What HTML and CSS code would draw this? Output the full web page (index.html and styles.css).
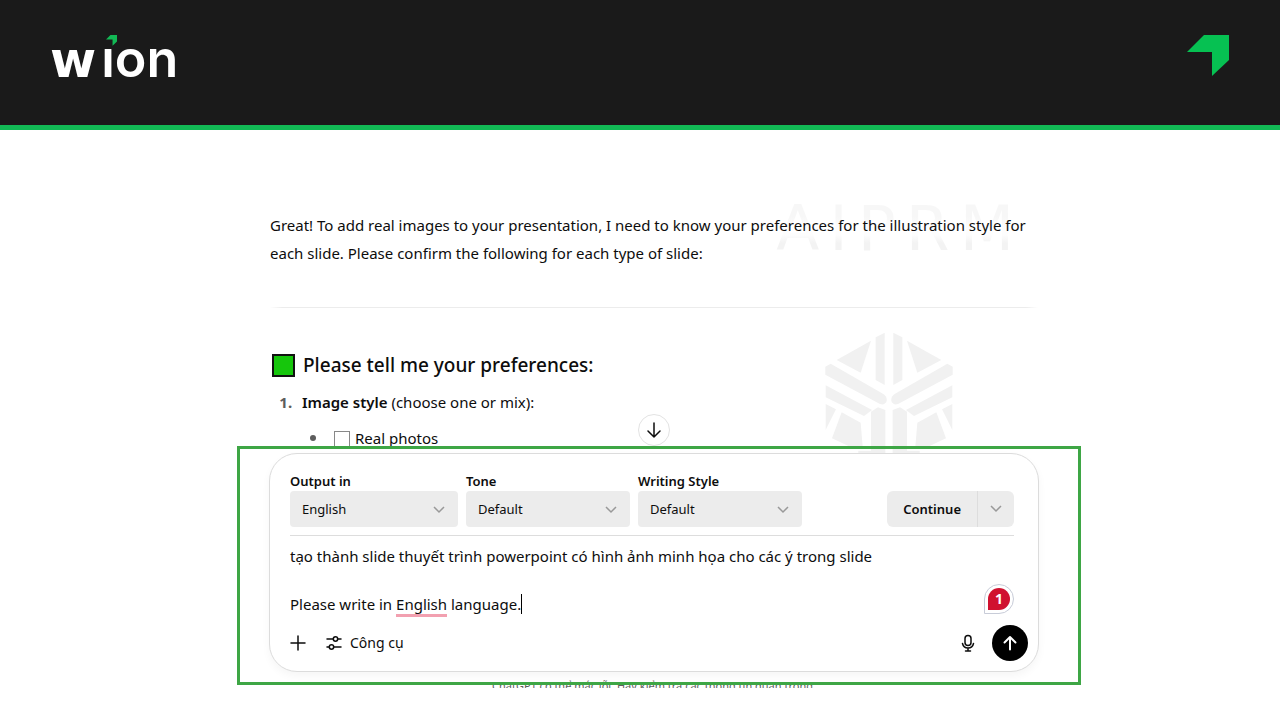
FILE: index.html
```html
<!DOCTYPE html>
<html lang="en">
<head>
<meta charset="utf-8">
<meta name="viewport" content="width=device-width, initial-scale=1">
<title>wion</title>
<link rel="stylesheet" href="styles.css">
</head>
<body>
<header class="banner">
  <div class="logo">
    <span class="logo-wide">w</span><span class="logo-rest">ıon</span>
    <svg class="logo-dot" viewBox="0 0 42 41" aria-hidden="true"><path d="M0 17 17 0H42V25L25 41V17Z"/></svg>
  </div>
  <svg class="mark" viewBox="0 0 42 41" aria-hidden="true"><path d="M0 17 17 0H42V25L25 41V17Z"/></svg>
</header>

<main class="chat">
  <div class="watermark" aria-hidden="true">
    <div class="watermark-name"><span>A</span><span>I</span><span>P</span><span>R</span><span>M</span></div>
    <svg class="watermark-mark" viewBox="105 36 384 366">
      <g id="half">
        <path d="M257 52 284 38V195L257 180Z"/>
        <path d="M140 120 243 62 212 158Z"/>
        <path d="M106 140 122 131 280 222Q292 230 290 243 284 257 270 252L106 164Z"/>
        <path d="M107 196 246 270 222 288 107 232Z"/>
        <path d="M107 252 138 268 107 330Z"/>
        <path d="M155 277 212 308 218 380H180L126 355Z"/>
        <path d="M243 275 264 262 286 270V402H205V392H243Z"/>
      </g>
      <use href="#half" transform="translate(594 0) scale(-1 1)"/>
    </svg>
  </div>

  <article class="message">
    <p class="intro">Great! To add real images to your presentation, I need to know your preferences for the illustration style for each slide. Please confirm the following for each type of slide:</p>
    <hr class="rule">
    <h2 class="title"><span class="square"></span>Please tell me your preferences:</h2>
    <ol class="steps">
      <li><strong>Image style</strong> (choose one or mix):
        <ul class="options">
          <li><span class="bullet"></span><label class="option"><input class="tick" type="checkbox">Real photos</label></li>
        </ul>
      </li>
    </ol>
    <button class="scroll-down" type="button" aria-label="Scroll to bottom">
      <svg class="icon" viewBox="0 0 16 16"><path d="M8 1V15M2 9 8 15 14 9"/></svg>
    </button>
  </article>

  <section class="frame">
    <form class="composer">
      <div class="settings">
        <div class="field field-wide">
          <label for="output">Output in</label>
          <div class="select"><select id="output"><option>English</option></select><svg class="chevron" viewBox="0 0 12 8"><path d="M1 1 6 6 11 1"/></svg></div>
        </div>
        <div class="field">
          <label for="tone">Tone</label>
          <div class="select"><select id="tone"><option>Default</option></select><svg class="chevron" viewBox="0 0 12 8"><path d="M1 1 6 6 11 1"/></svg></div>
        </div>
        <div class="field">
          <label for="style">Writing Style</label>
          <div class="select"><select id="style"><option>Default</option></select><svg class="chevron" viewBox="0 0 12 8"><path d="M1 1 6 6 11 1"/></svg></div>
        </div>
        <div class="split">
          <button class="continue" type="button">Continue</button>
          <button class="more" type="button" aria-label="More options"><svg class="chevron-inline" viewBox="0 0 12 8"><path d="M1 1 6 6 11 1"/></svg></button>
        </div>
      </div>
      <div class="editor">
        <div class="prompt" role="textbox" aria-label="Prompt" aria-multiline="true" contenteditable="true" spellcheck="false"><p>tạo thành slide thuyết trình powerpoint có hình ảnh minh họa cho các ý trong slide</p><p><br></p><p>Please write in <span class="flagged">English</span> language.<span class="caret"></span></p></div>
        <div class="issues"><span class="issues-count">1</span></div>
      </div>
      <div class="toolbar">
        <button class="tool" type="button" aria-label="Add"><svg class="icon" viewBox="0 0 16 16"><path d="M8 1V15M1 8H15"/></svg></button>
        <button class="tool" type="button"><svg class="icon" viewBox="0 0 16 16"><path d="M1 4H7M12 4H15M1 12H3M8 12H15"/><circle cx="9.5" cy="4" r="2.2"/><circle cx="5.5" cy="12" r="2.2"/></svg>Công cụ</button>
        <button class="tool mic" type="button" aria-label="Dictate"><svg class="icon" viewBox="0 0 16 18"><rect x="5" y="1.5" width="6" height="10" rx="3"/><path d="M2.5 9.5Q3.5 14 8 14 12.5 14 13.5 9.5M8 14V17M5.5 17H10.5"/></svg></button>
        <button class="send" type="button" aria-label="Send"><svg class="icon" viewBox="0 0 16 16"><path d="M8 14.500V2M2.5 7.5 8 2 13.5 7.5"/></svg></button>
      </div>
    </form>
  </section>
  <p class="notice">ChatGPT có thể mắc lỗi. Hãy kiểm tra các thông tin quan trọng.</p>
</main>
</body>
</html>
```
FILE: styles.css
```css
* { box-sizing: border-box; }
body {
  margin: 0;
  background: #fff;
  color: #0d0d0d;
  font: 15px/28px "Noto Sans", "Open Sans", sans-serif;
}
p, h2, ol, ul { margin: 0; padding: 0; }
button, select { border: 0; background: none; color: inherit; font: inherit; padding: 0; cursor: pointer; }
svg { display: block; }

.banner {
  display: flex;
  justify-content: space-between;
  align-items: flex-start;
  padding: 35px 51px 41px 50px;
  background: #1a1a1a;
  border-bottom: 5px solid #12b955;
}
.logo {
  position: relative;
  display: flex;
  align-items: baseline;
  gap: 5px;
  color: #fff;
}
.logo-wide { font: 700 50px/48px "DejaVu Sans", sans-serif; }
.logo-rest { font: 600 52px/48px Inter, sans-serif; }
.logo-dot { position: absolute; left: 56px; top: 0; width: 11px; fill: #12b955; }
.mark { width: 42px; height: 41px; fill: #06c152; }

.chat {
  position: relative;
  width: 768px;
  max-width: 100%;
  margin: 0 auto;
  left: 14px;
  padding-top: 81px;
}
.watermark { position: absolute; inset: 0; z-index: -1; }
.watermark-name {
  position: absolute;
  right: 24px;
  top: 67px;
  display: flex;
  gap: 10px;
  font: 63px/64px "DejaVu Sans", sans-serif;
  color: transparent;
  background: linear-gradient(#f7f7f7 20px, #fdfdfd 32px, #fdfdfd 38px, #f3f3f3 46px);
  background-clip: text;
}
.watermark-mark { position: absolute; right: 85px; top: 202px; width: 128px; height: 122px; fill: #f1f1f1; }

.message { position: relative; }
.rule { height: 1px; margin: 40px 0 43px; border: 0; background: linear-gradient(90deg, #fff, #ececec 12px calc(100% - 12px), #fff); }
.title {
  display: flex;
  align-items: center;
  gap: 8px;
  padding-left: 2px;
  font-size: 19px;
  font-weight: 500;
  line-height: 28px;
}
.square { width: 23px; height: 23px; background: #16c60c; border: 2px solid #111; }
strong { font-weight: 600; }
.steps { padding: 9px 0 0 26px; }
.steps > li { padding-left: 6px; }
.steps > li::marker { color: #5d5d5d; font-weight: 700; }
.options { padding: 8px 0 0 8px; list-style: none; }
.options li { display: flex; align-items: center; gap: 18px; }
.bullet { width: 6px; height: 6px; border-radius: 50%; background: #5d5d5d; }
.option { display: flex; align-items: center; gap: 5px; }
.tick { appearance: none; width: 16px; height: 16px; margin: 2px 0 0; border: 1px solid #888; background: #fff; }
.scroll-down {
  position: absolute;
  left: calc(50% - 16px);
  bottom: 6px;
  display: grid;
  place-items: center;
  width: 32px;
  height: 32px;
  border: 1px solid #e3e3e3;
  border-radius: 50%;
  background: #fff;
}
.icon { width: 16px; height: 16px; fill: none; stroke: currentColor; stroke-width: 1.5; stroke-linecap: round; stroke-linejoin: round; }

.frame {
  position: relative;
  margin: -6px -43px 0 -33px;
  padding: 4px 39px 10px 29px;
  border: 3px solid #3ea645;
}
.composer {
  padding: 18px 10px 10px 20px;
  border: 1px solid #dcdcdc;
  border-radius: 28px;
  background: #fff;
  box-shadow: 0 4px 8px #0000000a;
}
.settings {
  display: flex;
  align-items: flex-end;
  gap: 8px;
  margin-right: 14px;
  padding-bottom: 8px;
  border-bottom: 1px solid #ddd;
  font-size: 13px;
  line-height: 19px;
}
.field { display: grid; flex: 0 1 164px; }
.field-wide { flex-basis: 168px; }
.field label { font-weight: 600; }
.select { position: relative; }
.select select { appearance: none; width: 100%; height: 36px; padding: 0 12px; border-radius: 4px; background: #ececec; }
.chevron, .chevron-inline { width: 12px; height: 8px; fill: none; stroke: #999; stroke-width: 1.5; }
.chevron { position: absolute; right: 13px; top: 15px; pointer-events: none; }
.split { display: flex; height: 36px; margin-left: auto; border-radius: 6px; background: #ececec; }
.continue { padding: 0 16px; font-weight: 600; }
.more { display: grid; place-items: center; width: 37px; border-left: 1px solid #ddd; }
.editor { position: relative; padding-top: 8px; line-height: 24px; }
.prompt { outline: 0; }
.flagged { border-bottom: 3px solid #f2a0b0; }
.caret { display: inline-block; width: 1px; height: 20px; vertical-align: -4px; background: #000; }
.issues {
  position: absolute;
  right: 14px;
  bottom: 2px;
  padding: 3px;
  border: 1px solid #c8ccd8;
  border-radius: 15px 15px 15px 0;
  background: #fff;
}
.issues-count { display: block; width: 22px; border-radius: 11px 11px 11px 0; background: #d0112f; color: #fff; font-size: 14px; font-weight: 700; line-height: 22px; text-align: center; }
.toolbar { display: flex; align-items: center; gap: 20px; margin-top: 9px; font-size: 14px; line-height: 20px; }
.tool { display: flex; align-items: center; gap: 8px; }
.mic { margin: 0 -4px 0 auto; }
.mic .icon { height: 18px; }
.send { display: grid; place-items: center; width: 36px; height: 36px; border-radius: 50%; background: #000; color: #fff; }
.send .icon { stroke-width: 2; }
.notice { position: relative; z-index: -1; height: 10px; margin-top: -7px; overflow: hidden; color: #5d5d5d; font-size: 11px; line-height: 16px; text-align: center; }
```
